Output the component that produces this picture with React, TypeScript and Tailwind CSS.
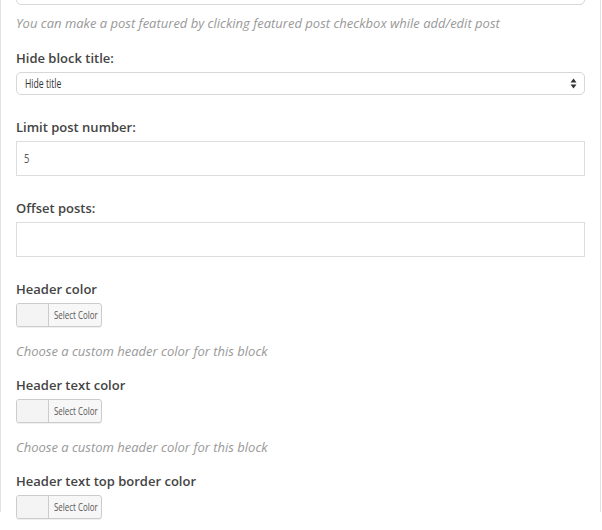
import React from 'react';

const Label: React.FC<{ children: React.ReactNode; className?: string }> = ({ children, className = '' }) => (
    <div className={`h-5 leading-5 text-[13px] font-semibold text-[#444] ${className}`}>{children}</div>
);

const Hint: React.FC<{ children: React.ReactNode; className?: string }> = ({ children, className = '' }) => (
    <div className={`h-5 leading-5 text-[13px] italic text-[#999] ${className}`}>{children}</div>
);

const SelectArrows: React.FC = () => (
    <svg width="7" height="11" viewBox="0 0 7 11" className="shrink-0">
        <path d="M3.5 0.5 L6.5 4.5 L0.5 4.5 Z" fill="#333" />
        <path d="M3.5 10.5 L6.5 6.5 L0.5 6.5 Z" fill="#333" />
    </svg>
);

// narrow face for control text
const Narrow: React.FC<{ children: React.ReactNode; className?: string }> = ({ children, className = '' }) => (
    <span className={`inline-block whitespace-nowrap origin-left scale-x-[0.72] font-['Open_Sans',sans-serif] ${className}`}>
        {children}
    </span>
);

const ColorButton: React.FC<{ className?: string }> = ({ className = '' }) => (
    <div className={`flex h-6 w-[86px] overflow-hidden rounded-[3px] border border-[#ccc] bg-[#f7f7f7] shadow-[0_1px_0_rgba(0,0,0,0.06)] ${className}`}>
        <div className="w-8 shrink-0 border-r border-[#ccc] bg-[#f4f4f4]" />
        <div className="flex min-w-0 flex-1 items-center pl-[5px] text-[11px] text-[#555]">
            <Narrow>Select Color</Narrow>
        </div>
    </div>
);

const App: React.FC = () => {
    return (
        <div className="w-[602px] h-[530px] overflow-hidden bg-white">
            <div className="w-[601px] h-full border-x border-[#e2e2e2] px-[15px] font-['Open_Sans',sans-serif]">
                {/* bottom of the previous field's select */}
                <div className="-mt-[18px] flex h-[23px] items-end justify-end rounded-[5px] border border-[#d7d7d7] pr-[7px] pb-[5px]">
                    <SelectArrows />
                </div>
                <Hint className="mt-2">You can make a post featured by clicking featured post checkbox while add/edit post</Hint>

                {/* Hide block title */}
                <Label className="mt-[15px]">Hide block title:</Label>
                <div className="mt-1 flex h-[23px] items-center justify-between rounded-[5px] border border-[#d7d7d7] pl-2 pr-[7px] text-[12px] text-[#333]">
                    <Narrow>Hide title</Narrow>
                    <SelectArrows />
                </div>

                {/* Limit post number */}
                <Label className="mt-[22px]">Limit post number:</Label>
                <div className="mt-1 flex h-[35px] items-center border border-[#ddd] px-[7px] text-[13px] text-[#555]">
                    <Narrow>5</Narrow>
                </div>

                {/* Offset posts */}
                <Label className="mt-[22px]">Offset posts:</Label>
                <div className="mt-1 h-[35px] border border-[#ddd]" />

                {/* Header color */}
                <Label className="mt-[22px]">Header color</Label>
                <ColorButton className="mt-1" />
                <Hint className="mt-[14px]">Choose a custom header color for this block</Hint>

                {/* Header text color */}
                <Label className="mt-[14px]">Header text color</Label>
                <ColorButton className="mt-1" />
                <Hint className="mt-[14px]">Choose a custom header color for this block</Hint>

                {/* Header text top border color */}
                <Label className="mt-[14px]">Header text top border color</Label>
                <ColorButton className="mt-1" />
            </div>
        </div>
    );
};

export default App;
